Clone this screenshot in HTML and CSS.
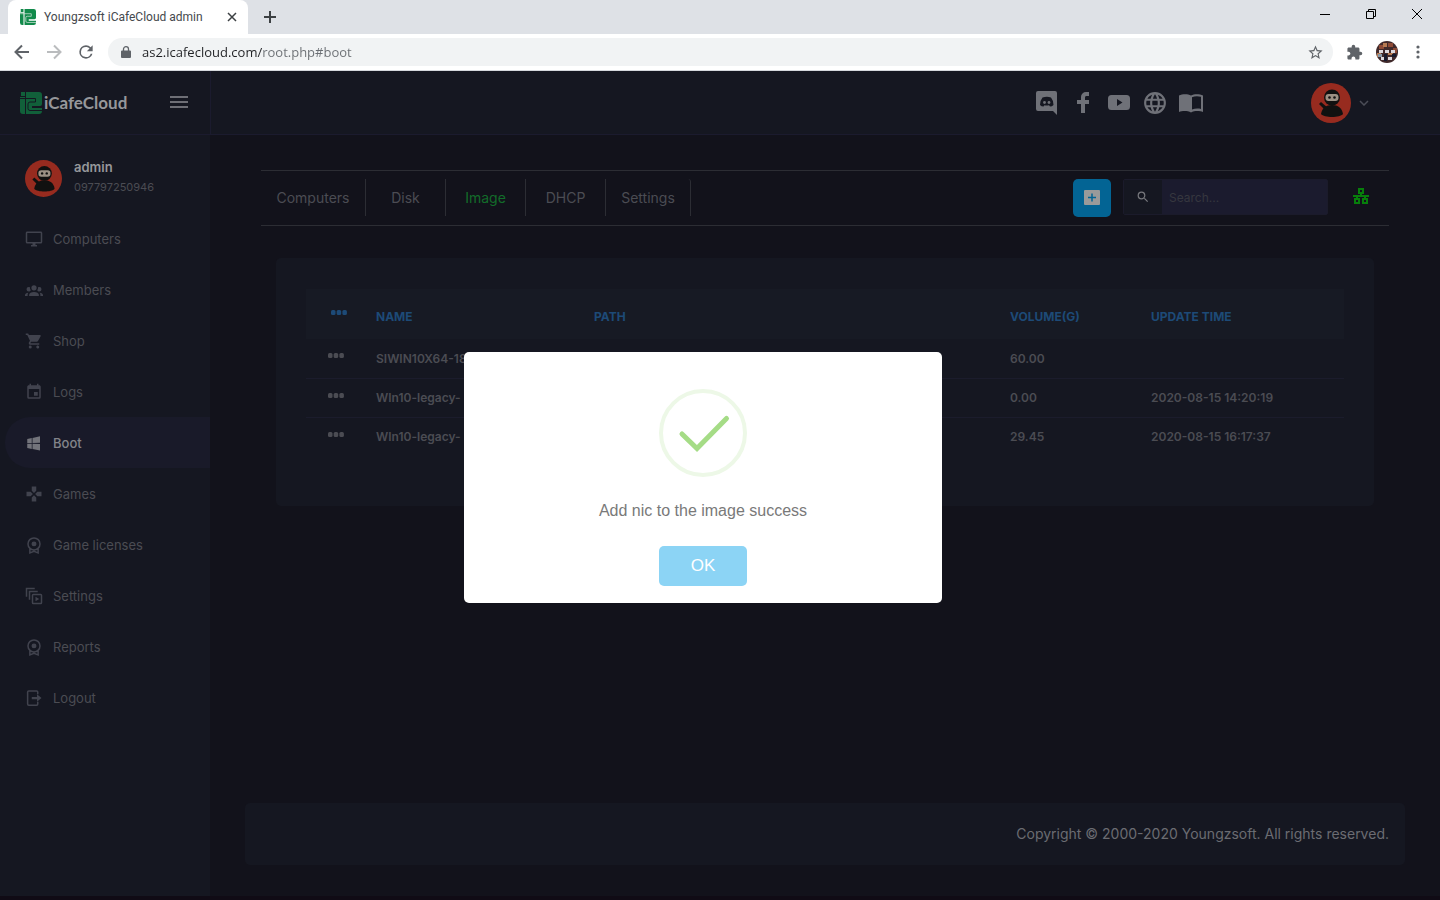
FILE: index.html
```html
<!DOCTYPE html>
<html lang="en">
<head>
  <meta charset="UTF-8">
  <meta name="viewport" content="width=device-width, initial-scale=1.0">
  <title>Youngzsoft iCafeCloud admin</title>
  <link rel="stylesheet" href="styles.css">
</head>
<body>
  <!-- shared symbols -->
  <svg class="sprite" aria-hidden="true">
    <symbol id="logo" viewBox="0 0 22 22">
      <path fill="currentColor" d="M1 0h4v4H1zM0 5h5v17H3a3 3 0 0 1-3-3zM6 0h13a3 3 0 0 1 3 3v9a2 2 0 0 1-2 2h-8v2h10v3a3 3 0 0 1-3 3H6z"/>
      <path class="logo-groove" fill="none" d="M0 6.500h15.500v3.500h-5.500q-2 0-2 2v4.500q0 2 2 2h12M5.500 0v22"/>
    </symbol>
    <symbol id="ninja" viewBox="0 0 40 40">
      <circle cx="20" cy="20" r="20" fill="#972b1f"/>
      <path d="M8 21l2-2 7 6-2 3z" fill="#111110"/>
      <path d="M10 31c1-6 5-9 11-9s10 3 11 9c-3 4-19 4-22 0z" fill="#111110"/>
      <circle cx="21" cy="14.500" r="8" fill="#111110"/>
      <rect x="14.500" y="11" width="13" height="7" rx="3" fill="#9c9184"/>
      <circle cx="18.500" cy="14.500" r="1.300" fill="#111110"/>
      <circle cx="23.500" cy="14.500" r="1.300" fill="#111110"/>
    </symbol>
    <symbol id="award" viewBox="0 0 24 24">
      <path fill="none" stroke="currentColor" stroke-width="2" d="M12 2.500a8 8 0 0 1 0 16a8 8 0 0 1 0-16zM6.500 16v6.500l5.500-2 5.500 2V16"/>
      <circle cx="12" cy="10.500" r="3.300" fill="currentColor"/>
    </symbol>
    <symbol id="dots" viewBox="0 0 16 5">
      <rect width="4.500" height="5" rx="1.500"/><rect x="5.700" width="4.500" height="5" rx="1.500"/><rect x="11.400" width="4.500" height="5" rx="1.500"/>
    </symbol>
  </svg>

  <header class="browser">
    <div class="tab-strip">
      <div class="tab">
        <svg class="favicon"><use href="#logo"/></svg>
        <span class="tab-title">Youngzsoft iCafeCloud admin</span>
        <button class="chrome-btn tab-close" aria-label="Close tab">
          <svg width="10" height="10" viewBox="0 0 10 10"><path d="M1 1l8 8M9 1L1 9"/></svg>
        </button>
      </div>
      <button class="chrome-btn new-tab" aria-label="New tab">
        <svg width="14" height="14" viewBox="0 0 14 14"><path d="M7 1v12M1 7h12"/></svg>
      </button>
      <div class="window-btns">
        <button class="chrome-btn" aria-label="Minimize"><svg width="12" height="12" viewBox="0 0 12 12"><path d="M1 6.500h10"/></svg></button>
        <button class="chrome-btn" aria-label="Restore"><svg width="12" height="12" viewBox="0 0 12 12"><path d="M1.500 3.500h7v7h-7zM3.500 3.500v-2h7v7h-2"/></svg></button>
        <button class="chrome-btn" aria-label="Close"><svg width="12" height="12" viewBox="0 0 12 12"><path d="M1 1l10 10M11 1L1 11"/></svg></button>
      </div>
    </div>
    <div class="address-bar">
      <button class="chrome-btn" aria-label="Back"><svg width="16" height="16" viewBox="0 0 16 16"><path class="thick" d="M15 8H2M8 1.500L1.500 8 8 14.500"/></svg></button>
      <button class="chrome-btn forward" aria-label="Forward"><svg width="16" height="16" viewBox="0 0 16 16"><path class="thick" d="M1 8h13M8 1.500L14.500 8 8 14.500"/></svg></button>
      <button class="chrome-btn reload" aria-label="Reload"><svg class="solid" width="20" height="20" viewBox="0 0 24 24"><path d="M17.650 6.350A7.960 7.960 0 0 0 12 4a8 8 0 1 0 7.730 10h-2.080A6 6 0 1 1 12 6c1.660 0 3.140.69 4.220 1.780L13 11h7V4z"/></svg></button>
      <div class="omnibox">
        <svg class="lock" width="10" height="13" viewBox="0 0 10 13"><path fill="#5f6368" d="M1 4.500h8a1 1 0 0 1 1 1V11a1 1 0 0 1-1 1H1a1 1 0 0 1-1-1V5.500a1 1 0 0 1 1-1z"/><path fill="none" stroke="#5f6368" stroke-width="1.300" d="M2.500 5V3a2.500 2.300 0 0 1 5 0v2"/></svg>
        <input class="url" type="text" aria-label="Address" value="as2.icafecloud.com/root.php#boot">
        <button class="chrome-btn" aria-label="Bookmark"><svg class="solid" width="17" height="17" viewBox="0 0 24 24"><path d="M22 9.240l-7.190-.62L12 2 9.190 8.630 2 9.240l5.460 4.730L5.820 21 12 17.270 18.180 21l-1.630-7.030zM12 15.400l-3.760 2.270 1-4.280-3.320-2.880 4.380-.38L12 6.100l1.710 4.040 4.380.38-3.320 2.880 1 4.280z"/></svg></button>
      </div>
      <div class="browser-actions">
        <button class="chrome-btn" aria-label="Extensions"><svg class="solid" width="17" height="17" viewBox="0 0 24 24"><path d="M20.500 11H19V7c0-1.100-.9-2-2-2h-4V3.500a2.500 2.500 0 0 0-5 0V5H4c-1.100 0-2 .9-2 2v3.800h1.500c1.500 0 2.700 1.200 2.700 2.700S5 16.200 3.500 16.200H2V20c0 1.100.9 2 2 2h3.800v-1.500c0-1.500 1.200-2.700 2.700-2.700s2.700 1.200 2.700 2.700V22H17c1.100 0 2-.9 2-2v-4h1.500a2.500 2.500 0 0 0 0-5z"/></svg></button>
        <button class="chrome-btn" aria-label="Profile">
          <svg class="plain" width="22" height="22" viewBox="0 0 22 22">
            <circle cx="11" cy="11" r="11" fill="#40292a"/>
            <path d="M3 4h5v4H3zM12 2h5v4h-5zM17 7h4v5h-4z" fill="#8d4a35"/>
            <path d="M7 2h4v4H7zM1 12h4v4H1zM12 12h5v2h-5z" fill="#b77b52"/>
            <path d="M3 9h4v3H3zM9 9h4v3H9zM15 9h4v3h-4zM12 16h4v3h-4zM5 16h3v3H5z" fill="#dcd8dc"/>
            <path d="M2 13h4v3H2z" fill="#8799a8"/>
            <path d="M8 13h3v7H8zM16 13h4v3h-4z" fill="#171a2c"/>
          </svg>
        </button>
        <button class="chrome-btn" aria-label="Menu"><svg class="solid" width="14" height="14" viewBox="0 0 14 14"><circle cx="7" cy="2" r="1.600"/><circle cx="7" cy="7" r="1.600"/><circle cx="7" cy="12" r="1.600"/></svg></button>
      </div>
    </div>
  </header>

  <div class="app">
    <aside class="sidebar">
      <div class="brand">
        <a class="brand-link" href="#"><svg class="brand-mark"><use href="#logo"/></svg>iCafeCloud</a>
        <button class="menu-toggle" aria-label="Toggle menu"><svg width="18" height="14" viewBox="0 0 18 14"><path d="M0 2h18M0 7h18M0 12h18"/></svg></button>
      </div>
      <div class="user">
        <svg class="user-avatar"><use href="#ninja"/></svg>
        <div>
          <div class="user-name">admin</div>
          <div class="user-id">097797250946</div>
        </div>
      </div>
      <nav class="menu">
        <a href="#computers"><svg viewBox="0 0 24 24"><path d="M21,16H3V4H21M21,2H3C1.890,2 1,2.890 1,4V16A2,2 0 0,0 3,18H10V20H8V22H16V20H14V18H21A2,2 0 0,0 23,16V4C23,2.890 22.100,2 21,2Z"/></svg>Computers</a>
        <a href="#members"><svg viewBox="0 0 24 24"><path d="M12,5.500A3.500,3.500 0 0,1 15.500,9A3.500,3.500 0 0,1 12,12.500A3.500,3.500 0 0,1 8.500,9A3.500,3.500 0 0,1 12,5.500M5,8C5.560,8 6.080,8.150 6.530,8.420C6.380,9.850 6.800,11.270 7.660,12.380C7.160,13.340 6.160,14 5,14A3,3 0 0,1 2,11A3,3 0 0,1 5,8M19,8A3,3 0 0,1 22,11A3,3 0 0,1 19,14C17.840,14 16.840,13.340 16.340,12.380C17.200,11.270 17.620,9.850 17.470,8.420C17.920,8.150 18.440,8 19,8M5.500,18.250C5.500,16.180 8.410,14.500 12,14.500C15.590,14.500 18.500,16.180 18.500,18.250V20H5.500V18.250M0,20V18.500C0,17.110 1.890,15.940 4.450,15.600C3.860,16.280 3.500,17.220 3.500,18.250V20H0M24,20H20.500V18.250C20.500,17.220 20.140,16.280 19.550,15.600C22.110,15.940 24,17.110 24,18.500V20Z"/></svg>Members</a>
        <a href="#shop"><svg viewBox="0 0 24 24"><path d="M17,18A2,2 0 0,1 19,20A2,2 0 0,1 17,22C15.890,22 15,21.100 15,20C15,18.890 15.890,18 17,18M1,2H4.270L5.210,4H20A1,1 0 0,1 21,5C21,5.170 20.950,5.340 20.880,5.500L17.300,11.970C16.960,12.580 16.300,13 15.550,13H8.100L7.200,14.630L7.170,14.750A0.250,0.250 0 0,0 7.420,15H19V17H7C5.890,17 5,16.100 5,15C5,14.650 5.090,14.320 5.240,14.040L6.600,11.590L3,4H1V2M7,18A2,2 0 0,1 9,20A2,2 0 0,1 7,22C5.890,22 5,21.100 5,20C5,18.890 5.890,18 7,18Z"/></svg>Shop</a>
        <a href="#logs"><svg viewBox="0 0 24 24"><path d="M19,19H5V8H19M16,1V3H8V1H6V3H5C3.890,3 3,3.890 3,5V19A2,2 0 0,0 5,21H19A2,2 0 0,0 21,19V5C21,3.890 20.100,3 19,3H18V1M17,12H12V17H17V12Z"/></svg>Logs</a>
        <a href="#boot" class="active"><svg viewBox="0 0 24 24"><path d="M3,12V6.750L9,5.430V11.910L3,12M20,3V11.750L10,11.900V5.210L20,3M3,13L9,13.090V19.900L3,18.750V13M20,13.250V22L10,20.090V13.100L20,13.250Z"/></svg>Boot</a>
        <a href="#games"><svg viewBox="0 0 24 24"><path d="M16.500,9L13.500,12L16.500,15H22V9M9,16.500V22H15V16.500L12,13.500M7.500,9H2V15H7.500L10.500,12M15,7.500V2H9V7.500L12,10.500L15,7.500Z"/></svg>Games</a>
        <a href="#licenses"><svg><use href="#award"/></svg>Game licenses</a>
        <a href="#settings"><svg viewBox="0 0 24 24"><path class="line" d="M2 13V2h11M6 17V6h11M11 10h10a1 1 0 0 1 1 1v10a1 1 0 0 1-1 1H11a1 1 0 0 1-1-1V11a1 1 0 0 1 1-1z"/><path d="M14 13v6l5-3z"/></svg>Settings</a>
        <a href="#reports"><svg><use href="#award"/></svg>Reports</a>
        <a href="#logout"><svg viewBox="0 0 24 24"><path class="line" d="M17 7V4a1.500 1.500 0 0 0-1.500-1.500H5A1.500 1.500 0 0 0 3.500 4v16A1.500 1.500 0 0 0 5 21.500h10.500A1.500 1.500 0 0 0 17 20v-3"/><path d="M9 10.500h7V7l6 5-6 5v-3.500H9z"/></svg>Logout</a>
      </nav>
    </aside>

    <div class="page">
      <header class="topbar">
        <div class="social">
          <a href="#" aria-label="Discord"><svg viewBox="0 0 24 24"><path d="M3 0h17a2 2 0 0 1 2 2v22l-4-4H3a2 2 0 0 1-2-2V2a2 2 0 0 1 2-2z"/><path fill="#151721" d="M7.500 6.500q4.500-1.500 8.500 0 2.500 3 2.500 7.500-1.500 1.500-3.500 1.500l-1-1.300q-2.500.6-4.500 0l-1 1.300q-2 0-3.500-1.500 0-4.500 2.500-7.500z"/><circle cx="9.500" cy="11.500" r="1.400"/><circle cx="14" cy="11.500" r="1.400"/></svg></a>
          <a href="#" aria-label="Facebook"><svg viewBox="0 0 24 24"><path d="M18 1v4h-2.500C14.500 5 14 5.600 14 6.600V9h4v4h-4v9h-4v-9H6V9h4V6a5 5 0 0 1 5-5z"/></svg></a>
          <a href="#" aria-label="YouTube"><svg viewBox="0 0 24 24"><path fill-rule="evenodd" d="M4.500 4h15A3.500 3.500 0 0 1 23 7.500v8a3.500 3.500 0 0 1-3.500 3.500h-15A3.500 3.500 0 0 1 1 15.500v-8A3.500 3.500 0 0 1 4.500 4zM10 8v7l5.500-3.500z"/></svg></a>
          <a href="#" aria-label="Website"><svg viewBox="1 1 22 22"><path d="M16.360,14C16.440,13.340 16.500,12.680 16.500,12C16.500,11.320 16.440,10.660 16.360,10H19.740C19.900,10.640 20,11.310 20,12C20,12.690 19.900,13.360 19.740,14M14.590,19.560C15.190,18.450 15.650,17.250 15.970,16H18.920C17.960,17.650 16.430,18.930 14.590,19.560M14.340,14H9.660C9.560,13.340 9.500,12.680 9.500,12C9.500,11.320 9.560,10.650 9.660,10H14.340C14.430,10.650 14.500,11.320 14.500,12C14.500,12.680 14.430,13.340 14.340,14M12,19.960C11.170,18.760 10.500,17.430 10.090,16H13.910C13.500,17.430 12.830,18.760 12,19.960M8,8H5.080C6.030,6.340 7.570,5.060 9.400,4.440C8.800,5.550 8.350,6.750 8,8M5.080,16H8C8.350,17.250 8.800,18.450 9.400,19.560C7.570,18.930 6.030,17.650 5.080,16M4.260,14C4.100,13.360 4,12.690 4,12C4,11.310 4.100,10.640 4.260,10H7.640C7.560,10.660 7.500,11.320 7.500,12C7.500,12.680 7.560,13.340 7.640,14M12,4.030C12.830,5.230 13.500,6.570 13.910,8H10.090C10.500,6.570 11.170,5.230 12,4.030M18.920,8H15.970C15.650,6.750 15.190,5.550 14.590,4.440C16.430,5.070 17.960,6.340 18.920,8M12,2C6.470,2 2,6.500 2,12A10,10 0 0,0 12,22A10,10 0 0,0 22,12A10,10 0 0,0 12,2Z"/></svg></a>
          <a href="#" aria-label="Guide"><svg viewBox="0 0 24 24"><path fill-rule="evenodd" d="M0 4.500C3 3 8.500 2.500 12 4.500 15.500 2.500 21 3 24 4.500V21c-3-1.200-8.500-1.500-12 .5C8.500 19.500 3 19.800 0 21zM13 6.200V18.600c2.500-1.200 6-1.400 9-.7V5.800c-3-1-6.500-.8-9 .4z"/></svg></a>
        </div>
        <button class="account" aria-label="Account">
          <svg class="account-avatar"><use href="#ninja"/></svg>
          <svg class="chevron" viewBox="0 0 10 6"><path d="M1 1l4 4 4-4"/></svg>
        </button>
      </header>

      <main class="content">
        <div class="toolbar">
          <nav class="tabs">
            <a class="first" href="#computers">Computers</a>
            <a href="#disk">Disk</a>
            <a href="#image" class="active">Image</a>
            <a href="#dhcp">DHCP</a>
            <a class="last" href="#settings">Settings</a>
          </nav>
          <button class="add-btn" aria-label="Add"><svg width="16" height="16" viewBox="0 0 16 16"><rect width="16" height="15" rx="1" fill="#9a9a9a"/><path stroke="#036494" stroke-width="1.500" d="M8 3.500v8M4 7.500h8"/></svg></button>
          <div class="search">
            <label for="search"><svg width="12" height="12" viewBox="2 2 20 20"><path d="M9.500,3A6.500,6.500 0 0,1 16,9.500C16,11.110 15.410,12.590 14.440,13.730L14.710,14H15.500L20.500,19L19,20.500L14,15.500V14.710L13.730,14.440C12.590,15.410 11.110,16 9.500,16A6.500,6.500 0 0,1 3,9.500A6.500,6.500 0 0,1 9.500,3M9.500,5C7,5 5,7 5,9.500C5,12 7,14 9.500,14C12,14 14,12 14,9.500C14,7 12,5 9.500,5Z"/></svg></label>
            <input id="search" type="text" placeholder="Search...">
          </div>
          <button class="net-btn" aria-label="Network"><svg width="16" height="16" viewBox="0 0 16 16"><path d="M6 1h4v4H6zM8 5v3M0 8h16M4 8v3M12 8v3M2 11h4v4H2zM10 11h4v4h-4z"/></svg></button>
        </div>

        <section class="card">
          <table>
            <thead>
              <tr>
                <th class="col-more"><button class="more" aria-label="All images"><svg><use href="#dots"/></svg></button></th>
                <th class="col-name">NAME</th>
                <th>PATH</th>
                <th class="col-volume">VOLUME(G)</th>
                <th class="col-time">UPDATE TIME</th>
              </tr>
            </thead>
            <tbody>
              <tr>
                <td><button class="more" aria-label="Image actions"><svg><use href="#dots"/></svg></button></td>
                <td>SIWIN10X64-18</td>
                <td></td>
                <td>60.00</td>
                <td></td>
              </tr>
              <tr>
                <td><button class="more" aria-label="Image actions"><svg><use href="#dots"/></svg></button></td>
                <td>WIn10-legacy-</td>
                <td></td>
                <td>0.00</td>
                <td>2020-08-15 14:20:19</td>
              </tr>
              <tr>
                <td><button class="more" aria-label="Image actions"><svg><use href="#dots"/></svg></button></td>
                <td>WIn10-legacy-</td>
                <td></td>
                <td>29.45</td>
                <td>2020-08-15 16:17:37</td>
              </tr>
            </tbody>
          </table>
        </section>

        <footer class="footer">Copyright © 2000-2020 Youngzsoft. All rights reserved.</footer>
      </main>
    </div>
  </div>

  <div class="overlay">
    <div class="alert" role="alertdialog" aria-labelledby="alert-text">
      <svg class="alert-icon" viewBox="0 0 88 88">
        <circle cx="44" cy="44" r="42" fill="none" stroke="#edf8e7" stroke-width="4"/>
        <path d="M23 45l15 14.500L67.500 29.500" fill="none" stroke="#a5dc86" stroke-width="5" stroke-linecap="round"/>
      </svg>
      <p class="alert-text" id="alert-text">Add nic to the image success</p>
      <button class="alert-ok">OK</button>
    </div>
  </div>
</body>
</html>
```
FILE: styles.css
```css
* {
  box-sizing: border-box;
}

body {
  display: flex;
  flex-direction: column;
  min-height: 100vh;
  margin: 0;
  background-color: #12121b;
  border-bottom: 4px solid #100b15;
  font-family: Inter, "Open Sans", sans-serif;
  font-size: 13px;
  color: #4b4c53;
}

a {
  color: inherit;
  text-decoration: none;
}

button {
  padding: 0;
  border: none;
  background: none;
  color: inherit;
  font: inherit;
  cursor: pointer;
}

svg {
  display: block;
  flex: none;
  fill: currentColor;
}

.sprite {
  position: absolute;
  width: 0;
  height: 0;
}

.logo-groove {
  stroke: var(--groove);
  stroke-width: 1;
}

/* browser window */
.browser {
  background-color: #fff;
  border-bottom: 1px solid #d5d8dc;
  font-family: "Open Sans", "Noto Sans", sans-serif;
}

.tab-strip {
  display: flex;
  align-items: center;
  height: 34px;
  padding-left: 8px;
  background-color: #dee1e6;
}

.tab {
  display: flex;
  align-items: center;
  gap: 8px;
  width: 240px;
  height: 34px;
  padding: 0 11px 0 12px;
  background-color: #fff;
  border-radius: 8px 8px 0 0;
}

.favicon {
  --groove: #d3e5da;
  width: 16px;
  height: 16px;
  color: #128a4b;
}

.tab-title {
  flex: 1;
  font-family: Roboto, sans-serif;
  font-size: 12px;
  color: #45494d;
  white-space: nowrap;
}

.chrome-btn {
  display: flex;
  align-items: center;
  justify-content: center;
  color: #5f6368;
}

.chrome-btn svg {
  fill: none;
  stroke: currentColor;
}

.chrome-btn svg.solid {
  fill: currentColor;
  stroke: none;
}

.chrome-btn svg.plain {
  stroke: none;
}

.chrome-btn .thick {
  stroke-width: 2;
}

.tab-close,
.new-tab {
  color: #3c4043;
  stroke-width: 2;
}

.tab-close {
  stroke-width: 1.5;
}

.new-tab {
  margin-left: 15px;
}

.window-btns {
  display: flex;
  align-self: flex-start;
  margin-left: auto;
}

.window-btns .chrome-btn {
  width: 46px;
  height: 28px;
  color: #000;
}

.address-bar {
  display: flex;
  align-items: center;
  gap: 16px;
  height: 36px;
  padding: 0 15px 0 14px;
}

.forward {
  color: #babcbe;
}

.reload {
  margin: 0 -4px 0 -2px;
}

.omnibox {
  display: flex;
  flex: 1;
  align-items: center;
  height: 28px;
  margin-right: -3px;
  padding: 0 9px 0 13px;
  background-color: #f1f3f4;
  border-radius: 14px;
}

/* the path part of the url is greyed out */
.url {
  flex: 1;
  margin-left: 11px;
  padding: 0;
  border: none;
  outline: none;
  background: linear-gradient(to right, #202124 120px, #6a6e73 120px);
  -webkit-background-clip: text;
  background-clip: text;
  color: #202124;
  -webkit-text-fill-color: transparent;
  font-family: inherit;
  font-size: 13px;
  line-height: 20px;
}

.browser-actions {
  display: flex;
  align-items: center;
  gap: 13px;
}

/* admin page */
.app {
  display: flex;
  flex: 1;
}

.sidebar {
  width: 210px;
  background-color: #151721;
}

.brand {
  display: flex;
  align-items: center;
  justify-content: space-between;
  height: 64px;
  padding: 0 22px 0 20px;
  border-bottom: 1px solid #1b1b2e;
}

.brand-link {
  display: flex;
  align-items: center;
  gap: 2px;
  color: #96979b;
  font-family: Lato, sans-serif;
  font-size: 17px;
  font-weight: bold;
}

.brand-mark {
  --groove: #151721;
  width: 22px;
  height: 22px;
  color: #11603a;
}

.menu-toggle {
  padding-bottom: 2px;
}

.menu-toggle svg {
  stroke: #6e6f76;
  stroke-width: 2;
}

.user {
  display: flex;
  gap: 12px;
  padding: 24px 0 15px 25px;
}

.user-avatar {
  width: 37px;
  height: 37px;
  margin-top: 1px;
}

.user-name {
  color: #96979b;
  font-weight: 600;
  line-height: 17px;
}

.user-id {
  font-size: 11px;
  line-height: 22px;
}

.menu {
  padding-left: 5px;
}

.menu a {
  display: flex;
  align-items: center;
  gap: 10px;
  height: 51px;
  padding-left: 20px;
  border-radius: 25px 0 0 25px;
}

.menu svg {
  width: 18px;
  height: 18px;
  color: #41434e;
}

.menu .line {
  fill: none;
  stroke: currentColor;
  stroke-width: 2;
}

.menu .active {
  background-color: #191a29;
  color: #83848a;
  font-weight: 500;
}

.menu .active svg {
  color: #73747b;
}

.page {
  display: flex;
  flex: 1;
  flex-direction: column;
}

.topbar {
  display: flex;
  align-items: center;
  justify-content: flex-end;
  gap: 108px;
  height: 64px;
  padding-right: 71px;
  border-bottom: 1px solid #1b1b2e;
  border-left: 1px solid #1b1b2e;
  background-color: #151721;
}

.social {
  display: flex;
  gap: 12px;
  color: #6f7178;
}

.social svg {
  width: 24px;
  height: 24px;
}

.account {
  display: flex;
  align-items: center;
  gap: 8px;
}

.account-avatar {
  width: 40px;
  height: 40px;
}

.chevron {
  width: 10px;
  height: 6px;
  fill: none;
  stroke: #4b4d57;
  stroke-width: 1.5;
}

.content {
  display: flex;
  flex: 1;
  flex-direction: column;
  padding: 35px 35px 31px;
}

.toolbar {
  display: flex;
  margin: 0 16px 32px;
  padding: 8px 20px 8px 0;
  border-top: 1px solid #2c2d34;
  border-bottom: 1px solid #2c2d34;
}

.tabs {
  display: flex;
  flex: 1;
  height: 37px;
  font-size: 14px;
  line-height: 37px;
  text-align: center;
}

.tabs a {
  min-width: 80px;
  padding: 0 14px;
  border-right: 1px solid #2c2d34;
}

.tabs .first {
  min-width: 105px;
}

.tabs .last {
  min-width: 85px;
  border-top-right-radius: 3px;
}

.tabs .active {
  color: #126c2a;
}

.add-btn {
  display: flex;
  align-items: center;
  justify-content: center;
  width: 38px;
  height: 38px;
  margin-right: 12px;
  border-radius: 5px;
  background-color: #036494;
}

.search {
  display: flex;
  width: 205px;
  height: 36px;
  margin-right: 25px;
  border: 1px solid #1b1b2b;
  border-radius: 2px;
}

.search label {
  display: flex;
  align-items: center;
  justify-content: center;
  width: 38px;
  background-color: #151721;
  color: #77787d;
}

.search input {
  flex: 1;
  min-width: 0;
  padding: 0 7px;
  border: none;
  background-color: #1b1b2e;
  color: #77787d;
  font: inherit;
  font-size: 12px;
}

.search input::placeholder {
  color: #36373f;
}

.net-btn {
  height: 34px;
  color: #077e0b;
}

.net-btn svg {
  fill: none;
  stroke: currentColor;
  stroke-width: 2;
}

.card {
  margin: 0 31px;
  padding: 31px 30px 50px;
  border-radius: 5px;
  background-color: #151721;
}

table {
  width: 100%;
  border-collapse: collapse;
  table-layout: fixed;
  font-size: 12px;
  font-weight: 600;
}

th,
td {
  padding: 0 10px;
  text-align: left;
}

th {
  height: 50px;
  padding-top: 5px;
  background-color: #171a24;
  color: #1d4a77;
  font-weight: 700;
}

td {
  height: 39px;
  border-bottom: 1px solid #1b1c2c;
}

tbody tr:last-child td {
  border-bottom: none;
}

.col-more {
  width: 60px;
  padding-left: 25px;
}

.col-name {
  width: 218px;
}

.col-volume {
  width: 141px;
}

.col-time {
  width: 203px;
}

td:first-child {
  padding-left: 22px;
}

.more {
  display: block;
  padding-bottom: 5px;
}

th .more {
  padding-bottom: 8px;
}

.more svg {
  width: 16px;
  height: 5px;
}

.footer {
  margin-top: auto;
  padding: 20px 16px;
  border-radius: 5px;
  background-color: #151721;
  color: #6b6c72;
  font-size: 14px;
  line-height: 22px;
  text-align: right;
}

/* success message */
.overlay {
  position: fixed;
  inset: 0;
  display: flex;
  align-items: center;
  justify-content: center;
  padding: 55px 34px 0 0;
}

.alert {
  display: flex;
  flex-direction: column;
  align-items: center;
  width: 478px;
  padding: 37px 17px 17px;
  border-radius: 5px;
  background-color: #fff;
  font-family: "Liberation Sans", Arial, sans-serif;
}

.alert-icon {
  width: 88px;
  height: 88px;
}

.alert-text {
  margin: 23px 0 25px;
  color: #797979;
  font-size: 16px;
  line-height: 21px;
}

.alert-ok {
  width: 88px;
  height: 40px;
  border-radius: 5px;
  background-color: #8cd4f5;
  color: #fff;
  font-size: 17px;
  font-weight: 500;
}
```
